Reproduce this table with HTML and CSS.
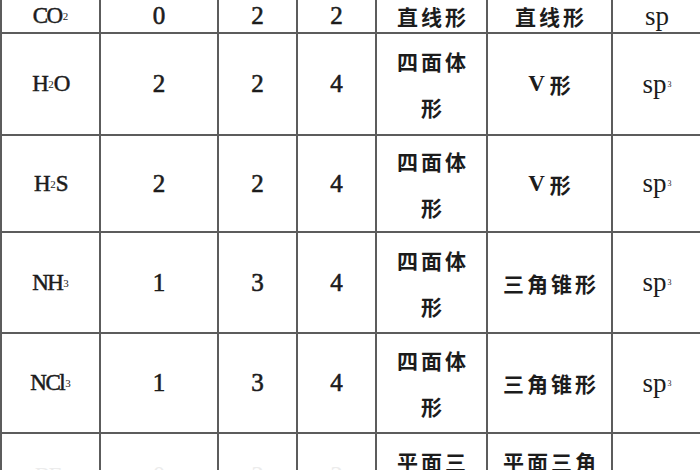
FILE: index.html
```html
<!DOCTYPE html>
<html lang="zh">
<head>
<meta charset="utf-8">
<link rel="stylesheet" href="styles.css">
</head>
<body>
<div class="table">
  <div class="cell f">CO<span class="sub">2</span></div>
  <div class="cell n">0</div>
  <div class="cell n">2</div>
  <div class="cell n">2</div>
  <div class="cell zh">直线形</div>
  <div class="cell zh">直线形</div>
  <div class="cell sp">sp</div>

  <div class="cell f">H<span class="sub">2</span>O</div>
  <div class="cell n">2</div>
  <div class="cell n">2</div>
  <div class="cell n">4</div>
  <div class="cell zh">四面体<br>形</div>
  <div class="cell zh"><span class="v">V</span>形</div>
  <div class="cell sp">sp<span class="sup">3</span></div>

  <div class="cell f">H<span class="sub">2</span>S</div>
  <div class="cell n">2</div>
  <div class="cell n">2</div>
  <div class="cell n">4</div>
  <div class="cell zh">四面体<br>形</div>
  <div class="cell zh"><span class="v">V</span>形</div>
  <div class="cell sp">sp<span class="sup">3</span></div>

  <div class="cell f">NH<span class="sub">3</span></div>
  <div class="cell n">1</div>
  <div class="cell n">3</div>
  <div class="cell n">4</div>
  <div class="cell zh">四面体<br>形</div>
  <div class="cell zh">三角锥形</div>
  <div class="cell sp">sp<span class="sup">3</span></div>

  <div class="cell f">NCl<span class="sub">3</span></div>
  <div class="cell n">1</div>
  <div class="cell n">3</div>
  <div class="cell n">4</div>
  <div class="cell zh">四面体<br>形</div>
  <div class="cell zh">三角锥形</div>
  <div class="cell sp">sp<span class="sup">3</span></div>

  <div class="cell f faint">BF<span class="sub">3</span></div>
  <div class="cell n faint">0</div>
  <div class="cell n faint">3</div>
  <div class="cell n faint">3</div>
  <div class="cell zh top">平面三<br>角形</div>
  <div class="cell zh top">平面三角<br>形</div>
  <div class="cell sp">sp<span class="sup">2</span></div>
</div>
</body>
</html>
```

FILE: styles.css
```css
html, body {
  margin: 0;
  padding: 0;
  background: #fff;
  overflow: hidden;
  width: 700px;
  height: 470px;
}

.table {
  display: grid;
  grid-template-columns: 97px 116px 77px 77px 109px 123px 92px;
  grid-template-rows: 32px 100px 95px 99px 98px 84px;
  gap: 2px;
  padding-left: 2px;
  background: #5c5c5c;
  width: max-content;
  color: #1c1c1c;
}

.cell {
  background: #fff;
  display: flex;
  align-items: center;
  justify-content: center;
  text-align: center;
}

.n {
  font-family: "Liberation Serif", serif;
  font-size: 25px;
  -webkit-text-stroke: 0.6px #1c1c1c;
}

.f {
  font-family: "Liberation Serif", serif;
  font-size: 23px;
  letter-spacing: -1.5px;
  -webkit-text-stroke: 0.5px #1c1c1c;
}

.sub {
  font-size: 11px;
  letter-spacing: 0;
  margin-left: 1px;
  -webkit-text-stroke: 0;
}

.zh {
  font-family: "Noto Sans CJK SC", sans-serif;
  font-weight: 700;
  font-size: 21px;
  letter-spacing: 3px;
  line-height: 46px;
  padding-left: 3px;
}

.top {
  align-items: flex-start;
  padding-top: 4px;
}

.v {
  font-family: "Liberation Serif", serif;
  font-weight: bold;
  font-size: 23px;
  letter-spacing: 0;
  margin-right: 5px;
}

.sp {
  font-family: "Liberation Serif", serif;
  font-size: 27px;
  padding-right: 4px;
}

.sup {
  font-size: 8px;
  vertical-align: 17px;
  margin-left: 1px;
}

.faint {
  color: #ececec;
  -webkit-text-stroke: 0;
}
```
